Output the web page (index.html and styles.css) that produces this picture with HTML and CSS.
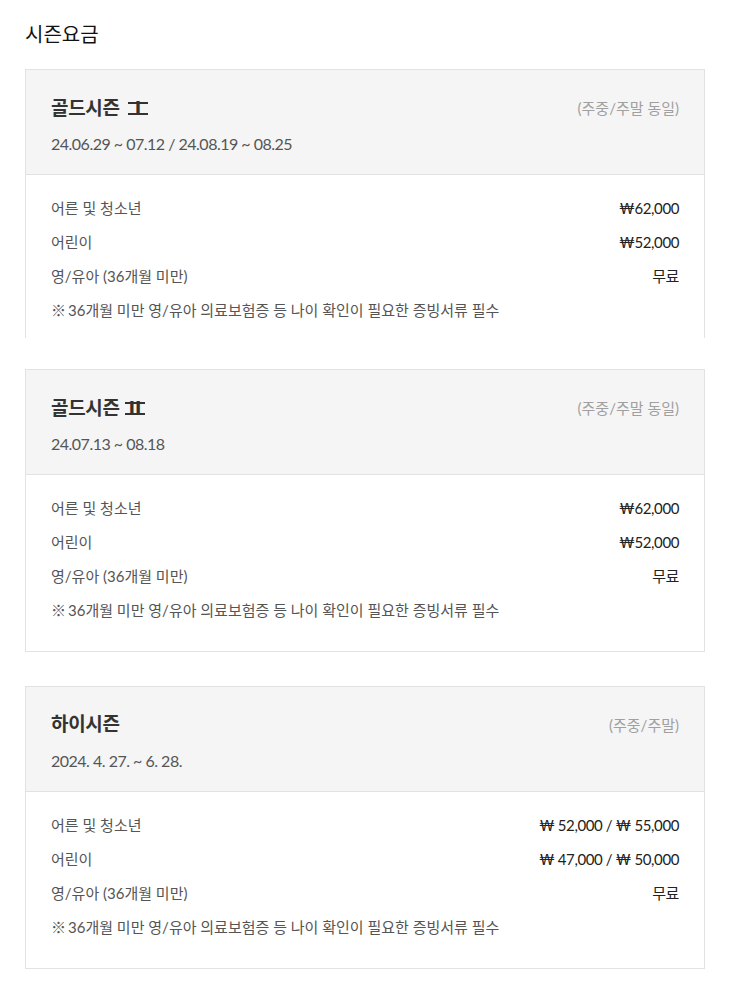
FILE: index.html
```html
<!DOCTYPE html>
<html lang="ko">
<head>
<meta charset="utf-8">
<title>시즌요금</title>
<link rel="stylesheet" href="styles.css">
</head>
<body>
<div class="page">
  <h2 class="page-title">시즌요금</h2>

  <section class="card card-open">
    <div class="card-head">
      <div class="head-row">
        <h3 class="season">골드시즌 <span class="numeral one">Ⅰ</span></h3>
        <span class="note">(주중/주말 동일)</span>
      </div>
      <p class="period">24.06.29 ~ 07.12 / 24.08.19 ~ 08.25</p>
    </div>
    <div class="card-body">
      <div class="row"><span class="label">어른 및 청소년</span><span class="price">₩62,000</span></div>
      <div class="row"><span class="label">어린이</span><span class="price">₩52,000</span></div>
      <div class="row"><span class="label">영/유아 (36개월 미만)</span><span class="price">무료</span></div>
      <div class="row"><span class="label">※<span class="gap"></span>36개월 미만 영/유아 의료보험증 등 나이 확인이 필요한 증빙서류 필수</span></div>
    </div>
  </section>

  <section class="card">
    <div class="card-head">
      <div class="head-row">
        <h3 class="season">골드시즌 <span class="numeral">Ⅱ</span></h3>
        <span class="note">(주중/주말 동일)</span>
      </div>
      <p class="period">24.07.13 ~ 08.18</p>
    </div>
    <div class="card-body">
      <div class="row"><span class="label">어른 및 청소년</span><span class="price">₩62,000</span></div>
      <div class="row"><span class="label">어린이</span><span class="price">₩52,000</span></div>
      <div class="row"><span class="label">영/유아 (36개월 미만)</span><span class="price">무료</span></div>
      <div class="row"><span class="label">※<span class="gap"></span>36개월 미만 영/유아 의료보험증 등 나이 확인이 필요한 증빙서류 필수</span></div>
    </div>
  </section>

  <section class="card card-last">
    <div class="card-head">
      <div class="head-row">
        <h3 class="season">하이시즌</h3>
        <span class="note">(주중/주말)</span>
      </div>
      <p class="period">2024. 4. 27. ~ 6. 28.</p>
    </div>
    <div class="card-body">
      <div class="row"><span class="label">어른 및 청소년</span><span class="price">₩ 52,000 / ₩ 55,000</span></div>
      <div class="row"><span class="label">어린이</span><span class="price">₩ 47,000 / ₩ 50,000</span></div>
      <div class="row"><span class="label">영/유아 (36개월 미만)</span><span class="price">무료</span></div>
      <div class="row"><span class="label">※<span class="gap"></span>36개월 미만 영/유아 의료보험증 등 나이 확인이 필요한 증빙서류 필수</span></div>
    </div>
  </section>
</div>
</body>
</html>
```
FILE: styles.css
```css
html, body {
  margin: 0;
  padding: 0;
  background: #fff;
}
body {
  font-family: "Lato", "Noto Sans CJK KR", sans-serif;
  color: #222;
}
.page {
  width: 680px;
  padding: 20px 0 0 25px;
}
.page-title {
  margin: 0 0 21px;
  font-size: 20px;
  line-height: 28px;
  font-weight: 400;
  color: #111;
}
.card {
  border: 1px solid #e2e2e2;
  margin-bottom: 34px;
}
.card-open {
  border-bottom: none;
  margin-bottom: 31px;
}
.card-head {
  background: #f5f5f5;
  padding: 24px 25px 18px;
  border-bottom: 1px solid #e2e2e2;
}
.head-row {
  display: flex;
  justify-content: space-between;
  align-items: center;
}
.season {
  margin: 0;
  height: 26px;
  font-size: 19px;
  line-height: 26px;
  font-weight: 700;
  color: #333;
  letter-spacing: -0.3px;
}
.numeral {
  position: relative;
  display: inline-block;
  font-family: "Noto Sans CJK KR", sans-serif;
  font-weight: 900;
  font-size: 18px;
  line-height: 26px;
  letter-spacing: 0;
  padding: 0 1px;
  margin-left: 1px;
}
.numeral.one {
  margin-left: 4px;
}
.numeral::before,
.numeral::after {
  content: "";
  position: absolute;
  left: 0;
  right: 0;
  height: 2.5px;
  background: currentColor;
}
.numeral::before {
  top: 7.5px;
}
.numeral::after {
  top: 18.5px;
}
.note {
  font-size: 15px;
  color: #a0a0a0;
}
.period {
  margin: 12px 0 0;
  font-size: 16px;
  line-height: 24px;
  color: #555;
  letter-spacing: -0.5px;
}
.card-body {
  padding: 16px 25px 24px;
}
.card-open .card-body {
  padding-bottom: 11px;
}
.row {
  display: flex;
  justify-content: space-between;
  line-height: 34px;
  font-size: 15px;
}
.label {
  color: #555;
}
.gap {
  display: inline-block;
  width: 2px;
}
.price {
  color: #222;
  letter-spacing: -0.4px;
}
```
